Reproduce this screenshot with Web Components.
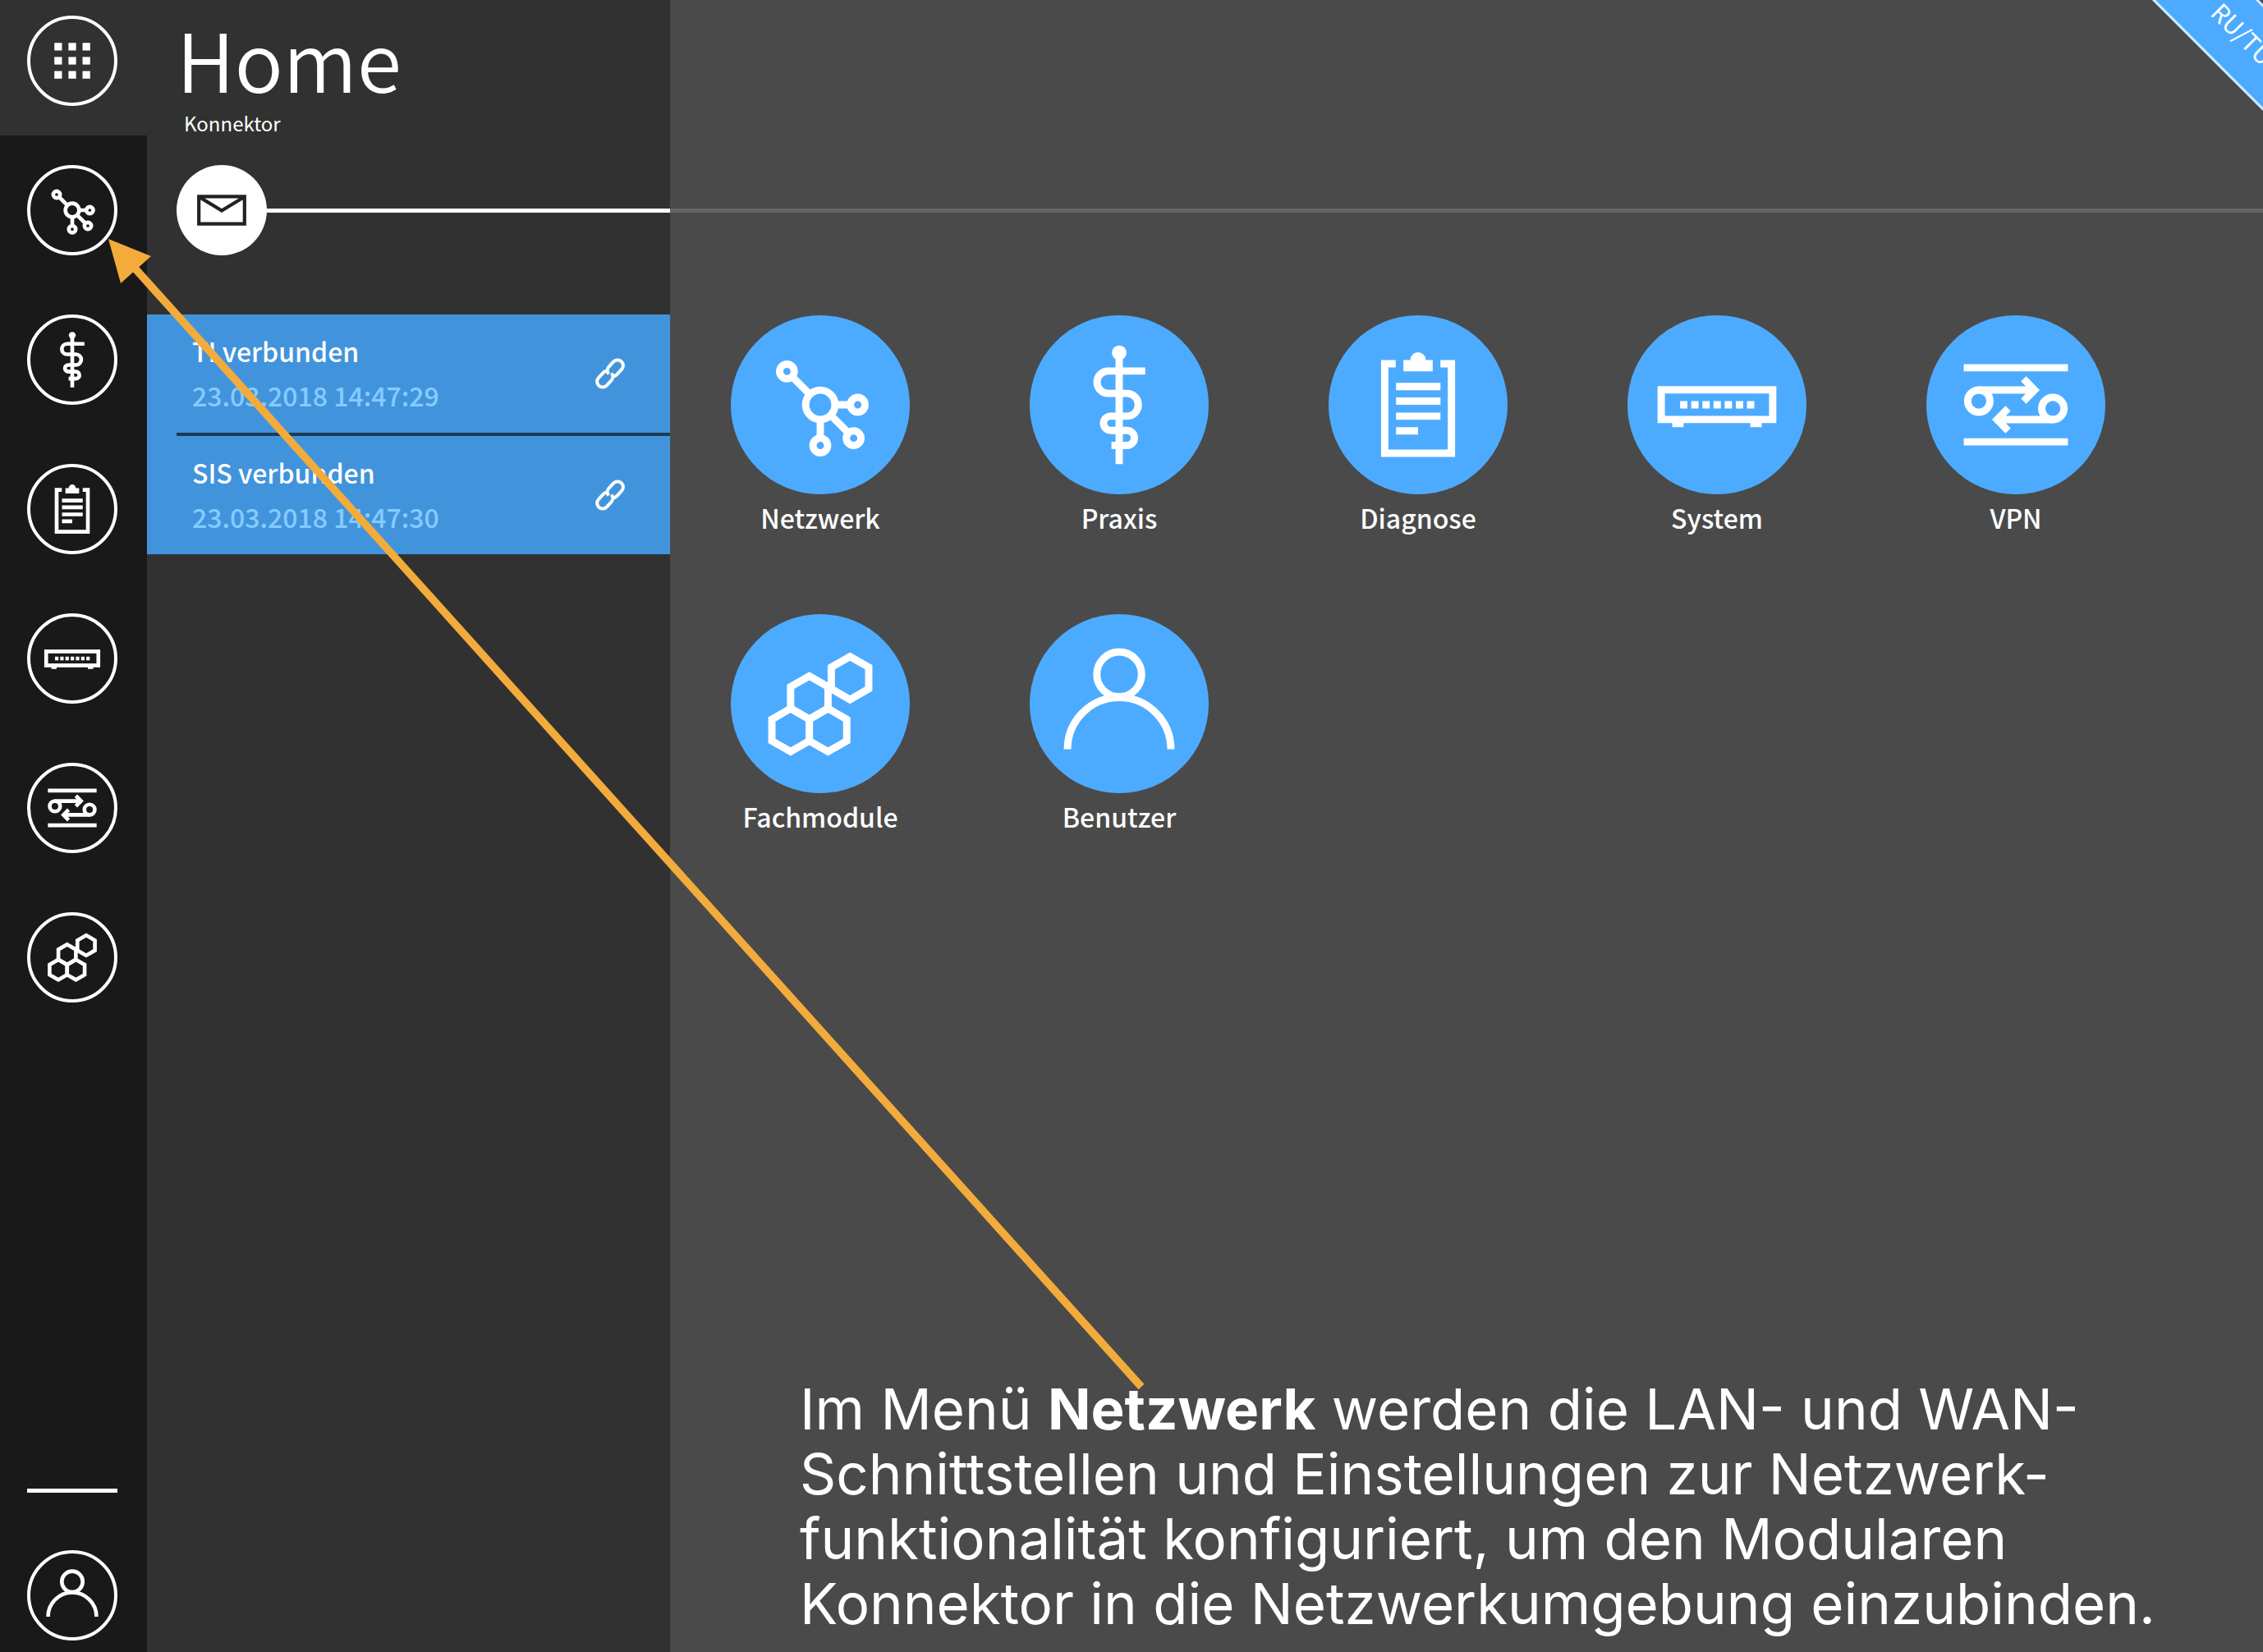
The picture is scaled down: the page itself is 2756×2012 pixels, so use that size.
<!DOCTYPE html>
<html lang="de">
<head>
<meta charset="utf-8">
<meta name="viewport" content="width=device-width, initial-scale=1">
<title>Konnektor – Home</title>
<style>
  :root {
    --rail: #191919;
    --panel: #313131;
    --stage: #4a4a4a;
    --blue: #4dabff;
    --status: #4194dc;
    --arrow: #f3ab3b;
  }
  body {
    margin: 0;
    background: var(--stage);
    color: #fff;
    font-family: "Noto Sans CJK JP", "Noto Sans", sans-serif;
  }
</style>
</head>
<body>
<konnektor-app></konnektor-app>

<script>
const ICONS = {
  grid: [-37, 0, 37].map(y => [-37, 0, 37].map(x =>
    `<rect x="${x - 10}" y="${y - 10}" width="20" height="20" fill="currentColor" stroke="none"/>`).join('')).join(''),
  network: `
    <circle r="18"/><circle cx="-41" cy="-41" r="9"/><circle cx="46" cy="0" r="9"/>
    <circle cx="41" cy="41" r="9"/><circle cx="0" cy="50" r="9"/>
    <path d="M-34.500-34.500-13-13M18 0H37M13 13 34.500 34.500M0 18V41"/>`,
  practice: `
    <circle cy="-64" r="9" fill="currentColor" stroke="none"/>
    <path d="M0-64V73"/>
    <path d="M32-41.500H-13.500a13.750 13.750 0 0 0 0 27.500H9.500a14 14 0 0 1 0 28H-10.500a8.750 8.750 0 0 0 0 17.500H9.500a9.250 9.250 0 0 1 0 18.500H-9.500"/>`,
  clipboard: `
    <path d="M-27.500-50.500H-41V59.500H41V-50.500H27.500"/>
    <path d="M-18-55h8.500a9.500 9.500 0 0 1 19 0H18v14H-18z" fill="currentColor" stroke="none"/>
    <path d="M-27-22.500H27.500M-27-4.500H27.500M-27 14H27.500M-27 32H0"/>`,
  device: `
    <path d="M-68.500-18.500H68.500V18H-68.500z"/>
    <path d="M-48 22V27.500M48 22V27.500" stroke-width="14"/>
    <path d="M-45.300 0H46" stroke-dasharray="9 4.700"/>`,
  vpn: `
    <path d="M-64-45.500H64M-64 45.500H64"/>
    <circle cx="-45.500" cy="-4.500" r="13.700"/><circle cx="45.500" cy="4.500" r="13.700"/>
    <path d="M-45.500-18.200H22M9.500-32 23-18.200 9.500-4.500M45.500 18.200H-22M-9.500 4.500-23 18.200-9.500 32"/>`,
  modules: [[36.5, -31.5], [-13.5, -7.5], [-36.5, 32.5], [9.5, 32.5]].map(([x, y]) =>
    `<path transform="translate(${x} ${y})" d="M0-26.500 23-13.250V13.250L0 26.500-23 13.250V-13.250z"/>`).join(''),
  user: `<circle cy="-36" r="27.500"/><path d="M-63.500 56a63.500 63.500 0 0 1 127 0"/>`,
  mail: `<path d="M-60-36H60V36H-60zM-58-34 0 1 58-34"/>`,
  link: `
    <g transform="rotate(-47)">
      <path d="M2-18A29 29 0 0 0-22-29H-56a29 29 0 0 0 0 58H-22A29 29 0 0 0 6 4"/>
      <path d="M-2 18A29 29 0 0 0 22 29H56a29 29 0 0 0 0-58H22A29 29 0 0 0-6-4"/>
    </g>`
};

function define(name, render) {
  customElements.define(name, class extends HTMLElement {
    connectedCallback() {
      if (this.shadowRoot) return;
      this.attachShadow({ mode: 'open' }).innerHTML = render(this);
    }
  });
}

define('k-icon', el => `
  <style>
    :host { display: block; }
    svg { display: block; width: 100%; height: 100%; overflow: visible; fill: none;
          stroke: currentColor; stroke-width: var(--stroke, 9); }
  </style>
  <svg viewBox="-110 -110 220 220" aria-hidden="true">${ICONS[el.getAttribute('name')]}</svg>`);

/* Round button of the navigation rail */
define('k-nav-item', el => `
  <style>
    :host { display: block; }
    button { display: grid; place-items: center; box-sizing: border-box; width: 110px; height: 110px;
             padding: 0; border: 4px solid #fff; border-radius: 50%; background: none; color: #fff; cursor: pointer; }
    k-icon { width: 102px; height: 102px; --stroke: 10; }
  </style>
  <button type="button" aria-label="${el.getAttribute('label')}"><k-icon name="${el.getAttribute('icon')}"></k-icon></button>`);

define('k-rail', () => `
  <style>
    :host { display: flex; flex-direction: column; background: var(--rail); }
    .home { height: 146px; padding: 19px 0 0 33px; background: var(--panel); }
    nav { display: flex; flex-direction: column; gap: 72px; padding: 36px 0 0 33px; }
    .foot { display: flex; flex-direction: column; gap: 70px; margin-top: auto; padding: 0 0 14px 33px; }
    hr { width: 110px; height: 5px; margin: 0; border: 0; background: #fff; }
  </style>
  <div class="home"><k-nav-item icon="grid" label="Home"></k-nav-item></div>
  <nav>
    <k-nav-item icon="network" label="Netzwerk"></k-nav-item>
    <k-nav-item icon="practice" label="Praxis"></k-nav-item>
    <k-nav-item icon="clipboard" label="Diagnose"></k-nav-item>
    <k-nav-item icon="device" label="System"></k-nav-item>
    <k-nav-item icon="vpn" label="VPN"></k-nav-item>
    <k-nav-item icon="modules" label="Fachmodule"></k-nav-item>
  </nav>
  <div class="foot"><hr><k-nav-item icon="user" label="Benutzer"></k-nav-item></div>`);

/* One message of the status list */
define('k-status', () => `
  <style>
    :host { display: flex; align-items: center; justify-content: space-between; box-sizing: border-box;
            height: 144px; padding: 0 47px 0 55px; background: var(--status); }
    .text { display: flex; flex-direction: column; padding-bottom: 2px; font-weight: 500; font-size: 32px; line-height: 54px; }
    .time { color: #86cbff; }
    k-icon { width: 52px; height: 52px; --stroke: 17; }
  </style>
  <div class="text"><span class="title"><slot></slot></span><span class="time"><slot name="time"></slot></span></div>
  <k-icon name="link"></k-icon>`);

define('k-panel', () => `
  <style>
    :host { display: block; background: var(--panel); }
    header { height: 165px; padding: 0 0 0 36px; margin-bottom: 36px; box-sizing: border-box; }
    h1 { margin: 0; padding-top: 8px; font-size: 98px; line-height: 124px; font-weight: 350; }
    p { margin: 0; padding-left: 9px; font-size: 24px; line-height: 36px; }
    .mail { display: flex; align-items: center; padding-left: 36px; }
    button { display: grid; place-items: center; width: 110px; height: 110px; padding: 0; border: 0;
             border-radius: 50%; background: #fff; color: #222; cursor: pointer; }
    button k-icon { width: 102px; height: 102px; --stroke: 9; }
    .line { flex: 1; height: 5px; background: #fff; }
    .list { display: flex; flex-direction: column; margin-top: 72px; background: var(--status); }
    hr { width: auto; height: 4px; margin: 0 0 0 36px; border: 0; background: #1d3b52; }
  </style>
  <header><h1>Home</h1><p>Konnektor</p></header>
  <div class="mail"><button type="button" aria-label="Nachrichten"><k-icon name="mail"></k-icon></button><span class="line"></span></div>
  <div class="list">
    <k-status>TI verbunden<time slot="time">23.03.2018 14:47:29</time></k-status>
    <hr>
    <k-status>SIS verbunden<time slot="time">23.03.2018 14:47:30</time></k-status>
  </div>`);

/* Large round menu entry with its caption */
define('k-tile', el => `
  <style>
    :host { display: block; }
    button { display: flex; flex-direction: column; align-items: center; gap: 2px; width: 218px; padding: 0; border: 0;
             background: none; color: inherit; font: 500 32px/52px "Noto Sans CJK JP", "Noto Sans", sans-serif; cursor: pointer; }
    k-icon { width: 218px; height: 218px; border-radius: 50%; background: var(--blue); }
    span { white-space: nowrap; }
  </style>
  <button type="button"><k-icon name="${el.getAttribute('icon')}"></k-icon><span><slot></slot></span></button>`);

/* Diagonal band across the top right corner */
define('k-ribbon', () => `
  <style>
    :host { position: absolute; top: -71px; left: calc(100% - 76px); box-sizing: border-box; width: 400px; height: 92px;
            padding-left: 70px; border: solid #cdeaff; border-width: 3px 0; background: var(--blue);
            font-size: 30px; line-height: 78px; transform: rotate(45deg); transform-origin: 0 0; }
  </style>
  <slot></slot>`);

define('k-note', () => `
  <style>
    :host { display: block; font: 400 69px/79px Inter, "Open Sans", sans-serif; }
    p { margin: 0; }
    ::slotted(b) { font-weight: 700; }
  </style>
  <p><slot></slot></p>`);

define('k-stage', () => `
  <style>
    :host { position: relative; display: flex; flex-direction: column; overflow: hidden; background: var(--stage); }
    hr { width: 100%; height: 5px; margin: 254px 0 0; border: 0; background: #656565; flex: none; }
    .tiles { display: flex; flex-wrap: wrap; gap: 92px 146px; padding: 125px 0 0 74px; }
    k-note { margin-top: auto; padding: 60px 0 19px 158px; }
  </style>
  <hr>
  <div class="tiles">
    <k-tile icon="network">Netzwerk</k-tile>
    <k-tile icon="practice">Praxis</k-tile>
    <k-tile icon="clipboard">Diagnose</k-tile>
    <k-tile icon="device">System</k-tile>
    <k-tile icon="vpn">VPN</k-tile>
    <k-tile icon="modules">Fachmodule</k-tile>
    <k-tile icon="user">Benutzer</k-tile>
  </div>
  <k-note>Im Menü <b>Netzwerk</b> werden die LAN- und WAN-<br>Schnittstellen und Einstellungen zur Netzwerk-<br>funktionalität konfiguriert, um den Modularen<br>Konnektor in die Netzwerkumgebung einzubinden.</k-note>
  <k-ribbon>RU/TU</k-ribbon>`);

/* Pointer from the note to the network entry of the rail */
define('k-arrow', () => `
  <style>
    :host { position: absolute; left: 0; top: 0; pointer-events: none; }
    svg { display: block; }
  </style>
  <svg width="1400" height="1700" viewBox="0 0 1400 1700" aria-hidden="true">
    <path d="M160 322 1390 1689" stroke="var(--arrow)" stroke-width="9.500"/>
    <path d="M132 291 184 312 147 345z" fill="var(--arrow)"/>
  </svg>`);

define('konnektor-app', () => `
  <style>
    :host { position: relative; display: grid; grid-template-columns: 179px 637px minmax(0, 1fr); min-height: 100vh; }
  </style>
  <k-rail></k-rail>
  <k-panel></k-panel>
  <k-stage></k-stage>
  <k-arrow></k-arrow>`);
</script>
</body>
</html>
